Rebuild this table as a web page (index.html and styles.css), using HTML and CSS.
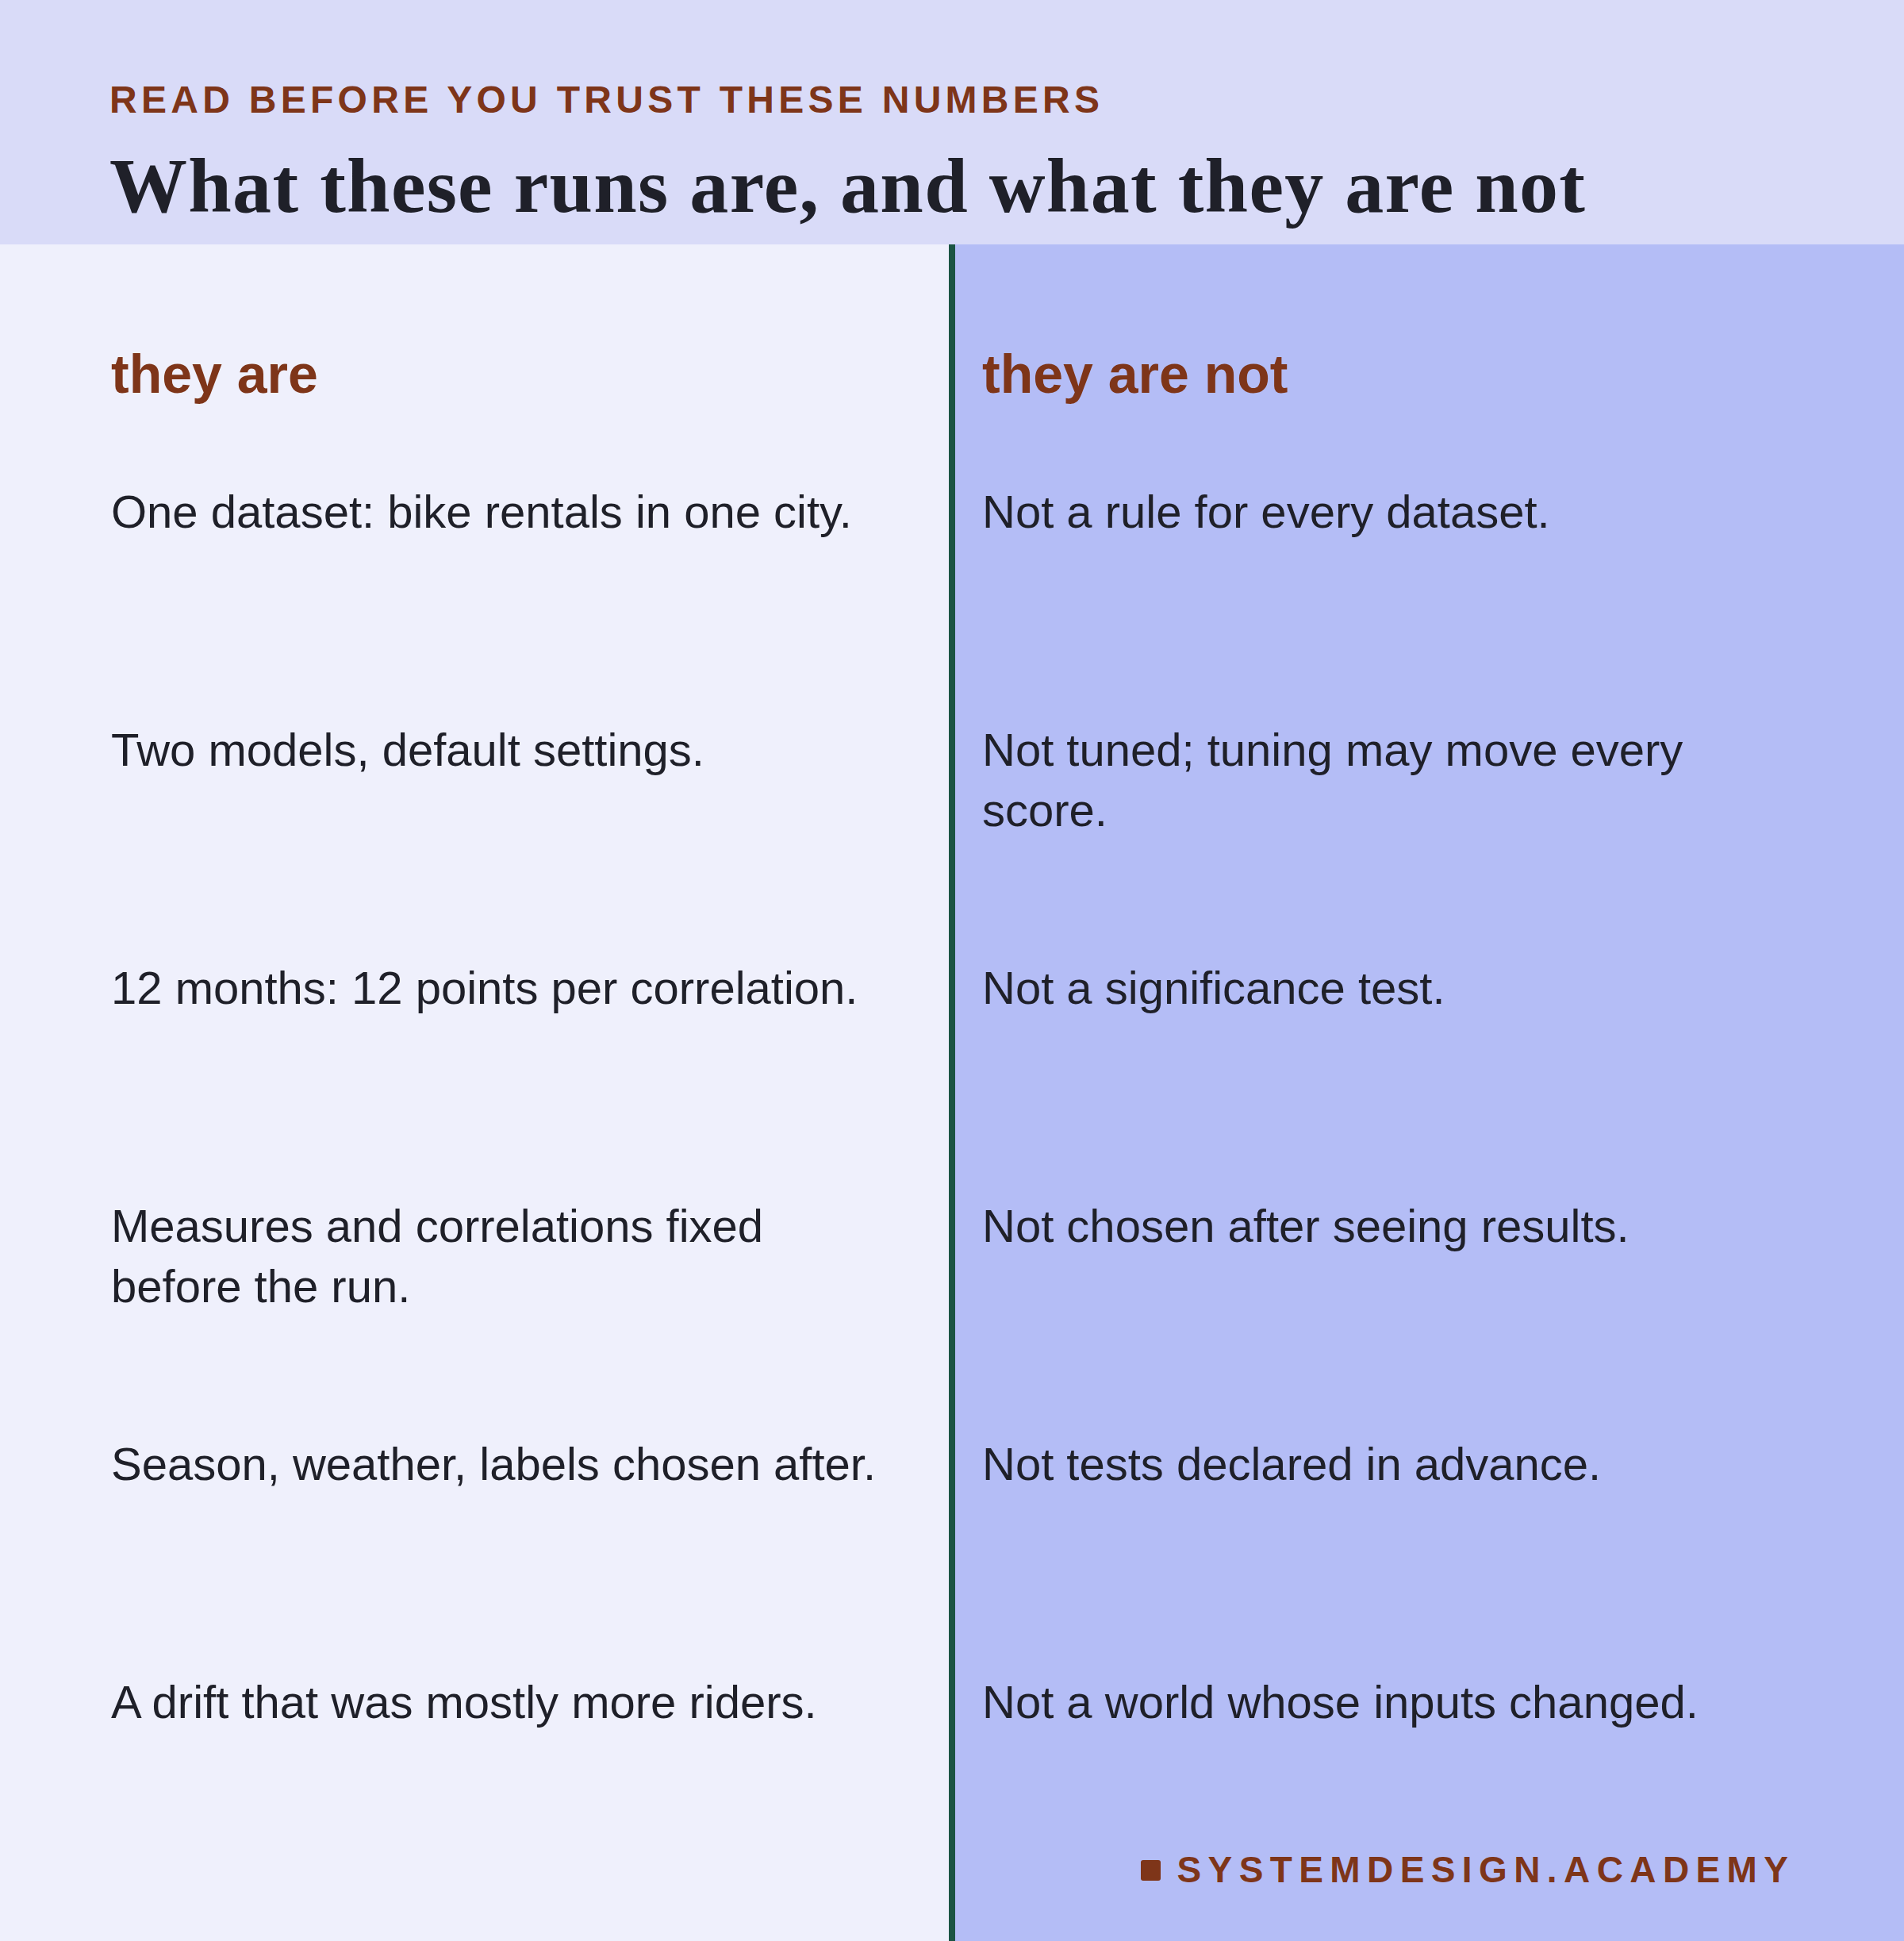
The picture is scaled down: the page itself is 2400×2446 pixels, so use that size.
FILE: index.html
```html
<!DOCTYPE html>
<html lang="en">
<head>
<meta charset="utf-8">
<title>What these runs are, and what they are not</title>
<link rel="stylesheet" href="styles.css">
</head>
<body>
<div class="page">
  <header class="header">
    <p class="eyebrow">READ BEFORE YOU TRUST THESE NUMBERS</p>
    <h1 class="title">What these runs are, and what they are not</h1>
  </header>
  <main class="columns">
    <section class="col col-are">
      <h2 class="col-heading">they are</h2>
      <ul class="items">
        <li class="item">One dataset: bike rentals in one city.</li>
        <li class="item">Two models, default settings.</li>
        <li class="item">12 months: 12 points per correlation.</li>
        <li class="item">Measures and correlations fixed before the run.</li>
        <li class="item">Season, weather, labels chosen after.</li>
        <li class="item">A drift that was mostly more riders.</li>
      </ul>
    </section>
    <section class="col col-not">
      <h2 class="col-heading">they are not</h2>
      <ul class="items">
        <li class="item">Not a rule for every dataset.</li>
        <li class="item">Not tuned; tuning may move every score.</li>
        <li class="item">Not a significance test.</li>
        <li class="item">Not chosen after seeing results.</li>
        <li class="item">Not tests declared in advance.</li>
        <li class="item">Not a world whose inputs changed.</li>
      </ul>
      <footer class="brand"><span class="brand-mark"></span><span class="brand-name">SYSTEMDESIGN.ACADEMY</span></footer>
    </section>
  </main>
</div>
</body>
</html>
```
FILE: styles.css
```css
* { box-sizing: border-box; }
html, body { margin: 0; padding: 0; }
body {
  font-family: "Liberation Sans", Arial, Helvetica, sans-serif;
  color: #1f2029;
  background: #eff0fc;
}
.page {
  width: 2400px;
  height: 2446px;
  display: grid;
  grid-template-rows: 308px 1fr;
}
.header {
  background: #d9dbf8;
  padding: 98px 140px 0 138px;
}
.eyebrow {
  margin: 0;
  font-size: 48px;
  line-height: 56px;
  font-weight: 700;
  letter-spacing: 0.11em;
  color: #7e3519;
}
.title {
  margin: 25px 0 0;
  font-family: "Liberation Serif", "Times New Roman", serif;
  font-size: 98px;
  line-height: 110px;
  font-weight: 700;
  letter-spacing: 1.3px;
  color: #1f2029;
}
.columns {
  display: grid;
  grid-template-columns: 1196px 1204px;
}
.col {
  display: flex;
  flex-direction: column;
  padding-top: 123px;
}
.col-are {
  background: #eff0fc;
  padding-left: 140px;
}
.col-not {
  background: #b4bdf6;
  border-left: 8px solid #1b5443;
  padding-left: 34px;
}
.col-heading {
  margin: 0;
  font-size: 68px;
  line-height: 80px;
  font-weight: 700;
  color: #7e3519;
}
.items {
  list-style: none;
  margin: 96px 0 0;
  padding: 0;
}
.item {
  height: 300px;
  max-width: 985px;
  font-size: 58px;
  line-height: 76px;
}
.item:last-child { height: auto; }
.brand {
  margin-top: auto;
  padding: 0 146px 62px 0;
  display: flex;
  align-items: center;
  justify-content: flex-end;
  gap: 21px;
  height: 118px;
}
.brand-mark {
  width: 25px;
  height: 26px;
  border-radius: 3px;
  background: #7e3519;
  margin-top: 2px;
}
.brand-name {
  font-size: 46px;
  line-height: 56px;
  font-weight: 700;
  letter-spacing: 8.4px;
  color: #7e3519;
  margin-right: -8.4px;
}
```
